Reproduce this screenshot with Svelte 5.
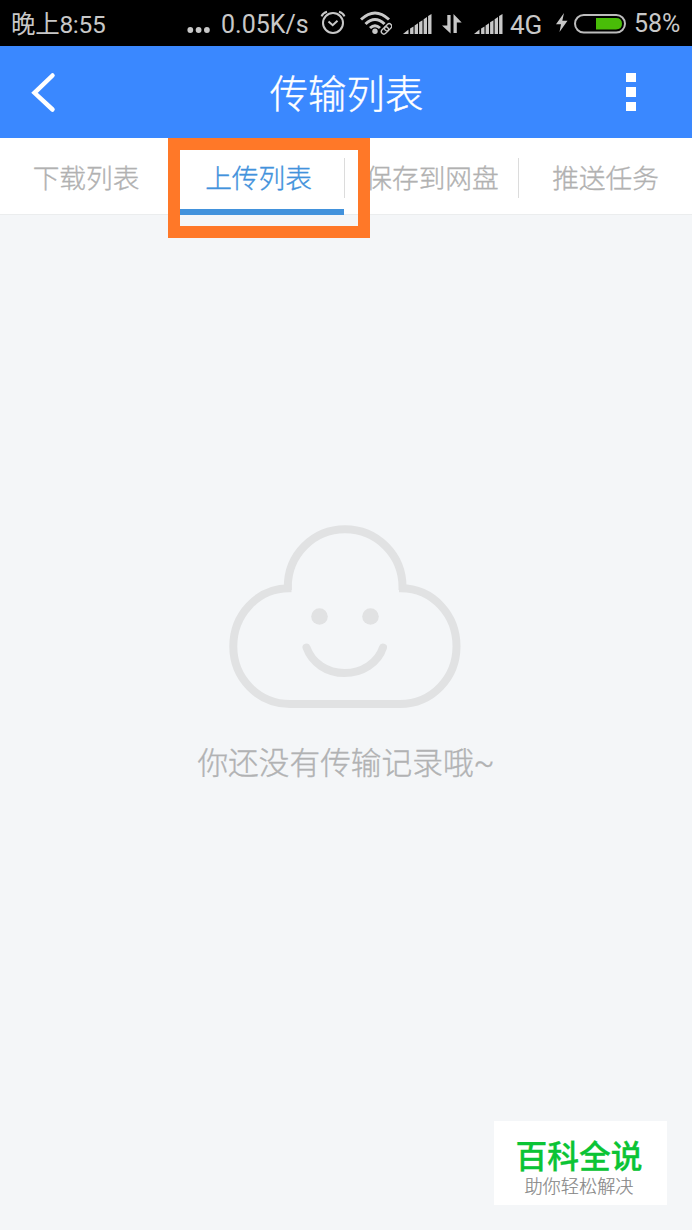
<script lang="ts">
	const tabs = ['下载列表', '上传列表', '保存到网盘', '推送任务'];
	const bars = [0, 1, 2, 3, 4];

	let active = $state(1);
	let speed = '0.05K/s';
	let battery = 58;
</script>

{#snippet signal()}
	<svg class="signal" width="29" height="20" viewBox="0 0 29 20">
		<path d="M0 20L5.5 15.6V20Z" />
		{#each bars as i}
			<path d="M{7.1 + i * 4.5} 20V{14.5 - i * 3.1}L{10.5 + i * 4.5} {12.4 - i * 3.1}V20Z" />
		{/each}
	</svg>
{/snippet}

<div class="screen">
	<div class="status">
		<span class="clock">晚上8:55</span>
		<svg class="more" width="24" height="8" viewBox="0 0 24 8">
			<circle cx="3.3" cy="4" r="2.9" />
			<circle cx="11.6" cy="4" r="2.9" />
			<circle cx="19.9" cy="4" r="2.9" />
		</svg>
		<span class="speed">{speed}</span>
		<svg class="alarm" width="26" height="26" viewBox="0 0 26 26">
			<g class="line">
				<circle cx="13" cy="14" r="10" />
				<path d="M8.5 12.5L12.7 16.2L17.5 11.8" />
				<path d="M1.5 7.3Q3 3.8 7 2.7M19 2.7Q23 3.8 24.5 7.3" />
			</g>
		</svg>
		<svg class="wifi" width="32" height="24" viewBox="0 0 32 24">
			<g class="arc">
				<path d="M1 8.5Q15 -4.5 29 8.5" />
				<path d="M5.5 13Q15 4 24.5 13" />
				<path d="M10 17Q15 12.5 20 17" />
			</g>
			<circle cx="15" cy="20.2" r="2.7" />
			<g class="link" transform="rotate(-45 26 17)">
				<rect x="19.5" y="15.5" width="8" height="5" rx="2.5" />
				<rect x="24" y="15.5" width="8" height="5" rx="2.5" />
			</g>
		</svg>
		{@render signal()}
		<svg class="transfer" width="20" height="20" viewBox="0 0 20 20">
			<path d="M5.3 1H8.6V19.5L0 11.5H5.3Z" />
			<path d="M11.5 0L19.7 8.5H14.8V19H11.5Z" />
		</svg>
		{@render signal()}
		<span class="network">4G</span>
		<svg class="bolt" width="12" height="20" viewBox="0 0 12 20">
			<path d="M8 0L0 11.2H5L3.5 19L11.5 7.8H6.3Z" />
		</svg>
		<svg class="battery" width="52" height="20" viewBox="0 0 52 20">
			<rect class="shell" x="1" y="1" width="50" height="17.5" rx="8.75" />
			<path class="charge" d="M22 4H42Q48 4 48 9.8Q48 15.5 42 15.5H22Z" />
		</svg>
		<span class="percent">{battery}%</span>
	</div>

	<header>
		<svg class="back" width="26" height="42" viewBox="0 0 26 42">
			<path d="M22.5 4.5L4.5 21.8L22.5 38.5" />
		</svg>
		<h1>传输列表</h1>
		<div class="menu"><i></i><i></i><i></i></div>
	</header>

	<nav>
		{#each tabs as tab, i}
			<button class:active={active === i} onclick={() => (active = i)}>{tab}</button>
		{/each}
		<div class="highlight"></div>
	</nav>

	<main>
		<svg width="232" height="184" viewBox="0 0 232 184">
			<g class="cloud">
				<path d="M58.8 65V62C58.8 30 84 4.3 116 4.3S173.5 30 173.5 62V65" />
				<path d="M62.5 63.3H60C28 63.5 4.3 90 4.3 121.3C4.3 153 29 179 61 179H171C203 179 227.5 153 227.5 121.3C227.5 90 204 63.5 172 63.3H170" />
				<path class="smile" d="M77.5 122.5C83 138 98 148 115.5 148S149 138 154 122.5" />
			</g>
			<circle cx="90.5" cy="91.5" r="8.3" />
			<circle cx="141.5" cy="91.5" r="8.3" />
		</svg>
		<p>你还没有传输记录哦<span>~</span></p>
	</main>

	<aside>
		<strong>百科全说</strong>
		<span>助你轻松解决</span>
	</aside>
</div>

<style>
	:global(body) {
		margin: 0;
	}

	.screen {
		position: relative;
		display: flex;
		flex-direction: column;
		width: 692px;
		height: 1230px;
		overflow: hidden;
		background: #f4f6f8;
		font-family: 'Noto Sans CJK SC', sans-serif;
		font-weight: 300;
	}

	svg {
		display: block;
		flex: none;
	}

	.status {
		display: flex;
		align-items: center;
		box-sizing: border-box;
		height: 46px;
		padding: 2px 0 0 11px;
		background: #000;
		color: #c8c8c8;
		fill: #c8c8c8;
		font-family: Roboto, 'Noto Sans CJK SC', sans-serif;
		font-size: 25px;
		font-weight: 400;
		line-height: 44px;
		white-space: nowrap;
	}

	.status span {
		flex: none;
	}

	.clock {
		width: 176px;
		padding-top: 1px;
		font-size: 24.5px;
		letter-spacing: -0.3px;
	}

	.more {
		margin-top: 12px;
	}

	.speed {
		width: 99px;
		margin-left: 10px;
		padding-top: 2px;
	}

	.alarm {
		margin-top: -4px;
	}

	.line,
	.arc,
	.link {
		fill: none;
		stroke: #c8c8c8;
		stroke-width: 2;
	}

	.arc {
		stroke-width: 3;
	}

	.link {
		stroke-width: 1.4;
	}

	.wifi {
		margin: -2px 11px 0 14px;
	}

	.transfer {
		margin: 0 12px 0 10px;
	}

	.network {
		width: 36px;
		margin-left: 7px;
		padding-top: 1px;
		font-size: 26px;
	}

	.bolt {
		margin: -2px 6px 0 10px;
	}

	.battery {
		margin-top: -1px;
	}

	.percent {
		margin-left: 8px;
	}

	.shell {
		fill: none;
		stroke: #bcbcbc;
		stroke-width: 2;
	}

	.charge {
		fill: #49bd08;
	}

	header {
		display: flex;
		align-items: center;
		justify-content: space-between;
		box-sizing: border-box;
		height: 92px;
		padding: 0 56px 0 30px;
		background: #3a88ff;
	}

	.back path {
		fill: none;
		stroke: #fff;
		stroke-width: 4.5;
		stroke-linecap: round;
	}

	h1 {
		margin: 0 0 0 11px;
		padding-bottom: 1px;
		color: #fff;
		font-size: 38.4px;
		font-weight: 300;
		line-height: 91px;
		-webkit-text-stroke: 0.4px;
	}

	.menu {
		display: grid;
		gap: 5px;
	}

	.menu i {
		width: 10px;
		height: 9.5px;
		background: #fff;
	}

	nav {
		position: relative;
		display: grid;
		grid-template-columns: 172px 173px 174px 173px;
		height: 77px;
		background: #fff;
		box-shadow: inset 0 -1px #ebedee;
	}

	button {
		position: relative;
		padding: 1px 0 0;
		border: 0;
		background: none;
		color: #b1b1b1;
		font: inherit;
		font-size: 26.7px;
		line-height: 76px;
		white-space: nowrap;
		-webkit-text-stroke: 0.35px;
	}

	button::after {
		content: '';
		position: absolute;
		top: 20px;
		right: 0;
		width: 1px;
		height: 40px;
		background: #dcdcdc;
	}

	button:last-of-type::after {
		display: none;
	}

	.active {
		color: #4292dc;
		background: linear-gradient(#4292dc, #4292dc) 0 100% / 172px 6px no-repeat;
	}

	.highlight {
		position: absolute;
		top: 0;
		left: 168px;
		box-sizing: border-box;
		width: 202px;
		height: 100px;
		border: 12px solid #ff7828;
		pointer-events: none;
	}

	main {
		display: flex;
		flex-direction: column;
		align-items: center;
		padding: 310px 3px 0 0;
	}

	main svg {
		fill: #e1e2e3;
	}

	.cloud {
		fill: none;
		stroke: #e1e2e3;
		stroke-width: 8;
	}

	.smile {
		stroke-linecap: round;
	}

	p {
		margin: 29px 0 0 3px;
		color: #b1b2b3;
		font-size: 30.7px;
		line-height: 46px;
		-webkit-text-stroke: 0.35px;
	}

	p span {
		font-family: Roboto, sans-serif;
	}

	aside {
		position: absolute;
		right: 25px;
		bottom: 25px;
		display: flex;
		flex-direction: column;
		align-items: center;
		box-sizing: border-box;
		width: 173px;
		height: 84px;
		padding: 12px 3px 0 0;
		background: #fff;
	}

	strong {
		color: #0bc435;
		font-size: 31.8px;
		font-weight: 500;
		line-height: 42px;
		-webkit-text-stroke: 0.3px;
	}

	aside span {
		color: #888;
		font-size: 18.2px;
		line-height: 20px;
		-webkit-text-stroke: 0.2px;
	}
</style>
